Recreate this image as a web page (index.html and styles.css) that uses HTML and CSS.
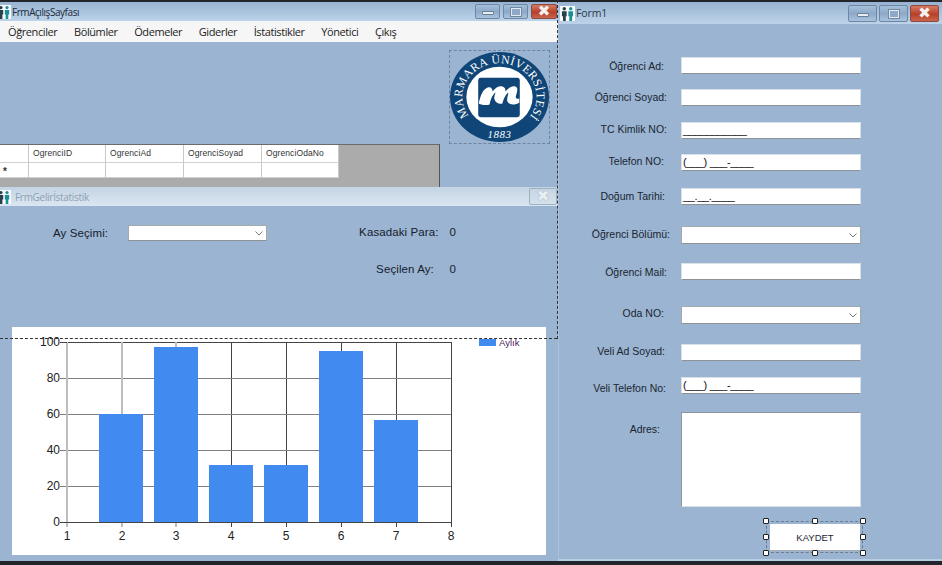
FILE: index.html
```html
<!DOCTYPE html>
<html lang="tr">
<head>
<meta charset="utf-8">
<title>Form Tasarımı</title>
<link rel="stylesheet" href="styles.css">
</head>
<body>
<svg class="defs" width="0" height="0" aria-hidden="true">
  <symbol id="people" viewBox="0 0 14 14">
    <rect width="14" height="14" fill="#f7fbfb"/>
    <circle cx="4" cy="2.6" r="1.6" fill="#2b3f4a"/>
    <path d="M1.8 5h4.4v4.5H5.4V14H2.8V9.5H1.8z" fill="#2b3f4a"/>
    <circle cx="10" cy="2.6" r="1.6" fill="#1c8f96"/>
    <path d="M7.8 5h4.4v4.5h-.9V14H8.7V9.5h-.9z" fill="#1c8f96"/>
  </symbol>
</svg>

<div class="desktop">

  <section class="window main-window">
    <header class="titlebar main-title">
      <svg class="app-icon"><use href="#people"/></svg>
      <span class="title-text">FrmAçılışSayfası</span>
      <div class="win-buttons small">
        <span class="win-btn"><i class="glyph-min"></i></span>
        <span class="win-btn"><i class="glyph-max"></i></span>
        <span class="win-btn close"><i class="glyph-x">✖</i></span>
      </div>
    </header>
    <nav class="menu">
      <span>Öğrenciler</span><span>Bölümler</span><span>Ödemeler</span><span>Giderler</span><span>İstatistikler</span><span>Yönetici</span><span>Çıkış</span>
    </nav>
    <div class="main-body">
      <div class="logo-box">
        <svg class="logo" viewBox="0 0 100 91">
          <ellipse cx="50" cy="45.5" rx="50" ry="45.5" fill="#0f4577"/>
          <ellipse cx="50" cy="45.5" rx="33.5" ry="30.5" fill="#fff"/>
          <rect x="28.5" y="26" width="42" height="40" rx="2.5" fill="#0f4577"/>
          <path d="M29 52C31 44 33 38 38 36C41 35 43 37 43 40C46 36 50 34 53 35C56 36 56 38 56 40C59 36 63 34 66 35C69 36 68 40 67 43C66 46 66 48 70 47L70 51C66 54 60 54 58 50C57 47 59 43 59 41C57 42 54 47 53 52C49 53 46 51 45 48C44 45 46 42 46 41C44 42 41 47 40 53C37 54 33 54 29 52Z" fill="#fff"/>
          <path id="logo-arc" d="M19 64.500A37.500 34 0 1 1 81 64.500" fill="none"/>
          <text class="logo-text"><textPath href="#logo-arc" textLength="154" lengthAdjust="spacing">MARMARA ÜNİVERSİTESİ</textPath></text>
          <text class="logo-year" x="50" y="87" text-anchor="middle">1883</text>
        </svg>
      </div>
      <div class="grid-view">
        <div class="grid-table">
          <span class="cell head corner"></span><span class="cell head">OgrenciID</span><span class="cell head">OgrenciAd</span><span class="cell head">OgrenciSoyad</span><span class="cell head">OgrenciOdaNo</span>
          <span class="cell row-head">*</span><span class="cell"></span><span class="cell"></span><span class="cell"></span><span class="cell"></span>
        </div>
      </div>
    </div>
  </section>

  <section class="window stats-window">
    <header class="titlebar stats-title">
      <svg class="app-icon"><use href="#people"/></svg>
      <span class="title-text">FrmGelirİstatistik</span>
      <span class="win-btn inactive-close"><i class="glyph-x">✖</i></span>
    </header>
    <div class="stats-top">
      <div class="month-pick">
        <label class="stat-label">Ay Seçimi:</label>
        <div class="combo month-combo"><svg class="chev" viewBox="0 0 8 5"><path d="M.5.5 4 4 7.500.5" fill="none" stroke="#777"/></svg></div>
      </div>
      <div class="stat-values">
        <span class="stat-label">Kasadaki Para:</span><span class="stat-label">0</span>
        <span class="stat-label inset">Seçilen Ay:</span><span class="stat-label">0</span>
      </div>
    </div>
    <div class="chart-panel">
      <svg class="chart" viewBox="12 327 534 228">
        <path class="grid-dark" d="M231 342V522M286 342V522M341 342V522M396 342V522M451 342V522M67 342H451"/>
        <path class="grid-mid" d="M60 378H451M60 414H451M60 450H451M60 486H451"/>
        <path class="grid-light" d="M67 342V527M122 342V527M176 342V527"/>
        <g class="bars">
          <rect x="99" y="414" width="44" height="108"/>
          <rect x="154" y="347" width="44" height="175"/>
          <rect x="209" y="465" width="44" height="57"/>
          <rect x="264" y="465" width="44" height="57"/>
          <rect x="319" y="351" width="44" height="171"/>
          <rect x="374" y="420" width="44" height="102"/>
        </g>
        <path class="grid-dark" d="M60 522H451M231 522V527M286 522V527M341 522V527M396 522V527M451 522V527M60 342H67"/>
        <g class="y-labels">
          <text x="60" y="346">100</text><text x="60" y="382">80</text><text x="60" y="418">60</text><text x="60" y="454">40</text><text x="60" y="490">20</text><text x="60" y="526">0</text>
        </g>
        <g class="x-labels">
          <text x="67" y="540">1</text><text x="122" y="540">2</text><text x="176" y="540">3</text><text x="231" y="540">4</text><text x="286" y="540">5</text><text x="341" y="540">6</text><text x="396" y="540">7</text><text x="451" y="540">8</text>
        </g>
        <rect class="legend-key" x="479" y="339" width="17" height="7"/>
        <text class="legend-text" x="499" y="346">Aylık</text>
      </svg>
    </div>
  </section>

  <div class="outline-bottom"></div>
  <div class="outline-right"></div>

  <section class="window form-window">
    <header class="titlebar form-title">
      <svg class="app-icon"><use href="#people"/></svg>
      <span class="title-text">Form1</span>
      <div class="win-buttons">
        <span class="win-btn"><i class="glyph-min"></i></span>
        <span class="win-btn"><i class="glyph-max"></i></span>
        <span class="win-btn close"><i class="glyph-x">✖</i></span>
      </div>
    </header>
    <form class="student-form">
      <label class="r1 down">Öğrenci Ad:</label><div class="field"></div>
      <label class="r2">Öğrenci Soyad:</label><div class="field"></div>
      <label class="r2 up">TC Kimlik NO:</label><div class="field mask">___________</div>
      <label class="r1 up">Telefon NO:</label><div class="field mask">(___) ___-____</div>
      <label class="r3">Doğum Tarihi:</label><div class="field mask">__.__.____</div>
      <label class="r4">Öğrenci Bölümü:</label><div class="combo form-combo"><svg class="chev" viewBox="0 0 8 5"><path d="M.5.5 4 4 7.500.5" fill="none" stroke="#777"/></svg></div>
      <label class="r2 down">Öğrenci Mail:</label><div class="field"></div>
      <label class="r1 up">Oda NO:</label><div class="combo form-combo"><svg class="chev" viewBox="0 0 8 5"><path d="M.5.5 4 4 7.500.5" fill="none" stroke="#777"/></svg></div>
      <label class="r3 up">Veli Ad Soyad:</label><div class="field"></div>
      <label class="r5">Veli Telefon No:</label><div class="field mask">(___) ___-____</div>
      <label class="r6">Adres:</label><div class="field address"></div>
      <div class="save-slot">
        <div class="selected">
          <button type="button" class="save">KAYDET</button>
          <i class="h tl"></i><i class="h tc"></i><i class="h tr"></i>
          <i class="h ml"></i><i class="h mr"></i>
          <i class="h bl"></i><i class="h bc"></i><i class="h br"></i>
        </div>
      </div>
    </form>
  </section>

</div>
</body>
</html>
```
FILE: styles.css
```css
* { box-sizing: border-box; }
html, body { margin: 0; padding: 0; }
body { width: 942px; height: 565px; overflow: hidden; background: #22262b; font-family: "Liberation Sans", Arial, sans-serif; }
.defs { position: absolute; }
.desktop { position: relative; width: 942px; height: 565px; overflow: hidden; }

.window { position: absolute; background: #9ab4d2; display: flex; flex-direction: column; overflow: hidden; }
.main-window { left: -6px; top: 2px; width: 564px; height: 336px; }
.stats-window { left: -6px; top: 187px; width: 564px; height: 374px; }
.form-window { left: 558px; top: 2px; width: 384px; height: 559px; border-bottom: 2px solid #b7cde3; border-left: 1px solid #a9c1da; }

.titlebar { display: flex; align-items: center; flex: none; }
.main-title { height: 19px; padding-left: 6px; background: linear-gradient(#98b4d2, #bcd3e9); }
.form-title { height: 22px; padding-left: 1px; background: linear-gradient(#98b3d1, #bdd3e9); }
.stats-title { height: 19px; padding-left: 6px; background: linear-gradient(#c4d4e3, #dae6f1); }
.app-icon { width: 15px; height: 15px; flex: none; }
.main-title .app-icon { width: 14px; height: 14px; margin-left: -3px; }
.stats-title .app-icon { width: 14px; height: 14px; margin-left: -3px; }
.title-text { font-family: "Open Sans", sans-serif; font-size: 10px; margin-left: 1px; color: #1d2a38; letter-spacing: -.45px; flex: 1; }
.form-title .title-text { font-size: 10.500px; color: #2c3a48; letter-spacing: -.1px; }
.stats-title .title-text { color: #8d9fb3; letter-spacing: -.3px; margin-left: 4px; }

.win-buttons { display: flex; gap: 2px; padding: 1px 3px 0 0; }
.win-buttons.small { gap: 3px; padding: 2px 1px 0 0; align-self: flex-start; }
.win-btn { width: 29px; height: 17px; border: 1px solid #6d87a5; border-radius: 2px; background: linear-gradient(#a4bfdb 0, #8ea9c8 50%, #a9c3de 100%); display: flex; align-items: center; justify-content: center; }
.small .win-btn { width: 25px; height: 15px; }
.small .win-btn.close { width: 26px; }
.win-btn.close { background: linear-gradient(#d57a62, #b8402a 55%, #c9644c); border-color: #8d4a42; }
.glyph-min { width: 12px; height: 4px; background: #e8edf3; border: 1px solid #6a7f96; border-radius: 1px; margin-top: 2px; }
.glyph-max { width: 12px; height: 10px; background: #8ea9c8; border: 2px solid #e4e9ef; outline: 1px solid #73879d; outline-offset: -1px; }
.glyph-x { font-style: normal; font-size: 15px; line-height: 1; color: #f2f2f2; font-family: "DejaVu Sans", sans-serif; }
.inactive-close { width: 28px; height: 17px; margin: 0 1px 0 0; background: linear-gradient(#c7d5e3, #d5e1ec); border-color: #9eb0c4; }
.inactive-close .glyph-x { color: #e9eef3; text-shadow: 0 0 1px #7d8d9f; }

.menu { height: 21px; flex: none; background: #f6f6f6; display: flex; align-items: center; padding-left: 14px; gap: 16.500px; font-family: "Open Sans", sans-serif; font-size: 11px; letter-spacing: -.4px; color: #1d1d1d; }
.main-body { flex: 1; display: flex; flex-direction: column; align-items: flex-end; position: relative; }

.logo-box { margin: 8px 8px 0 0; width: 101px; height: 94px; border: 1px dashed #6e84a0; padding: 0; }
.logo { display: block; width: 99px; height: 92px; }
.logo-text { font-family: "Liberation Serif", serif; font-size: 12px; fill: #fff; }
.logo-year { font-family: "Liberation Serif", serif; font-style: italic; font-size: 11px; fill: #fff; letter-spacing: .6px; }

.grid-view { position: absolute; left: 0; top: 102px; width: 446px; height: 60px; background: #ababab; border-top: 1px solid #6b6b6b; border-right: 1px solid #555; }
.grid-table { display: grid; grid-template-columns: 35px 77px 78px 78px 77px; grid-template-rows: 18px 15px; width: max-content; }
.cell { background: #fff; border-right: 1px solid #c8c8c8; border-bottom: 1px solid #d0d0d0; font-size: 8.500px; color: #333; padding: 2px 0 0 4px; line-height: 12px; letter-spacing: .1px; }
.corner { background: #fff; }
.row-head { font-weight: bold; font-size: 10px; padding: 3px 0 0 9px; color: #333; }

.stats-top { height: 121px; flex: none; position: relative; display: flex; }
.stat-label { font-size: 11.500px; color: #16202c; letter-spacing: .1px; white-space: nowrap; }
.month-pick { display: flex; align-items: center; align-self: flex-start; margin: 19px 0 0 59px; gap: 20px; }
.stat-values { display: grid; grid-template-columns: auto auto; row-gap: 25px; column-gap: 11px; align-self: flex-start; margin: 20px 0 0 92px; }
.stat-label.inset { padding-left: 17px; padding-right: 3px; }

.combo { background: #fff; border: 1px solid #a4a9ae; border-bottom-color: #8f9397; display: flex; align-items: center; justify-content: flex-end; padding-right: 3px; }
.month-combo { width: 139px; height: 16px; }
.form-combo { width: 180px; height: 18px; }
.chev { width: 8px; height: 5px; }

.chart-panel { margin-left: 18px; width: 534px; height: 228px; background: #fff; flex: none; }
.chart { display: block; width: 534px; height: 228px; }
.chart path { shape-rendering: crispEdges; fill: none; }
.grid-dark { stroke: #444; }
.grid-mid { stroke: #808080; }
.grid-light { stroke: #bdbdbd; stroke-width: 2; }
.bars rect { fill: #418bf0; }
.y-labels text { font-size: 12px; text-anchor: end; fill: #222; }
.x-labels text { font-size: 12px; text-anchor: middle; fill: #222; }
.legend-key { fill: #418bf0; }
.legend-text { font-size: 9.500px; fill: #4d1a5c; }

.outline-bottom { position: absolute; left: 0; top: 338px; width: 557px; border-top: 1px dashed #333; }
.outline-right { position: absolute; left: 557px; top: 0; height: 339px; border-left: 1px dashed #333; z-index: 2; }

.student-form { display: grid; flex: 1; grid-template-columns: 122px 180px; column-gap: 0;
  grid-template-rows: 32px 33px 32px 34px 38px 37px 43px 38px 33px 35px 109px 1fr;
  padding: 33px 0 0 0; align-items: start; }
.student-form label { font-size: 10.500px; color: #1b2530; text-align: right; line-height: 17px; white-space: nowrap; }
.down { padding-top: 1px; }
.up { margin-top: -1px; }
.r1 { padding-right: 17px; }
.r2 { padding-right: 14px; }
.r3 { padding-right: 16px; }
.r4 { padding-right: 11px; }
.r5 { padding-right: 15px; padding-top: 3px; }
.r6 { padding-right: 21px; padding-top: 9px; }
.field { background: #fff; height: 17px; border: 1px solid #d8e0e8; border-bottom: 1px solid #8e9296; }
.mask { font-size: 11px; line-height: 15px; padding-left: 1px; color: #111; letter-spacing: -.35px; white-space: nowrap; overflow: hidden; }
.address { height: 95px; border: 1px solid #8d959c; border-right-color: #d8e0e8; border-bottom-color: #d8e0e8; }
.save-slot { grid-column: 2; display: flex; justify-content: flex-end; }
.selected { position: relative; width: 97px; height: 32px; margin-right: -2px; border: 1px dashed #6b7c90; padding: 2px 2px 1px 3px; display: flex; }
.save { flex: 1; background: #fff; border: 0; border-bottom: 1px solid #aaa; font: 9.500px "Liberation Sans", sans-serif; color: #1c2430; padding: 0; }
.h { position: absolute; width: 6px; height: 6px; background: #fff; border: 1px solid #222; border-radius: 1px; }
.tl { left: -4px; top: -4px; } .tc { left: 45px; top: -4px; } .tr { right: -4px; top: -4px; }
.ml { left: -4px; top: 12px; } .mr { right: -4px; top: 12px; }
.bl { left: -4px; bottom: -4px; } .bc { left: 45px; bottom: -4px; } .br { right: -4px; bottom: -4px; }
```
